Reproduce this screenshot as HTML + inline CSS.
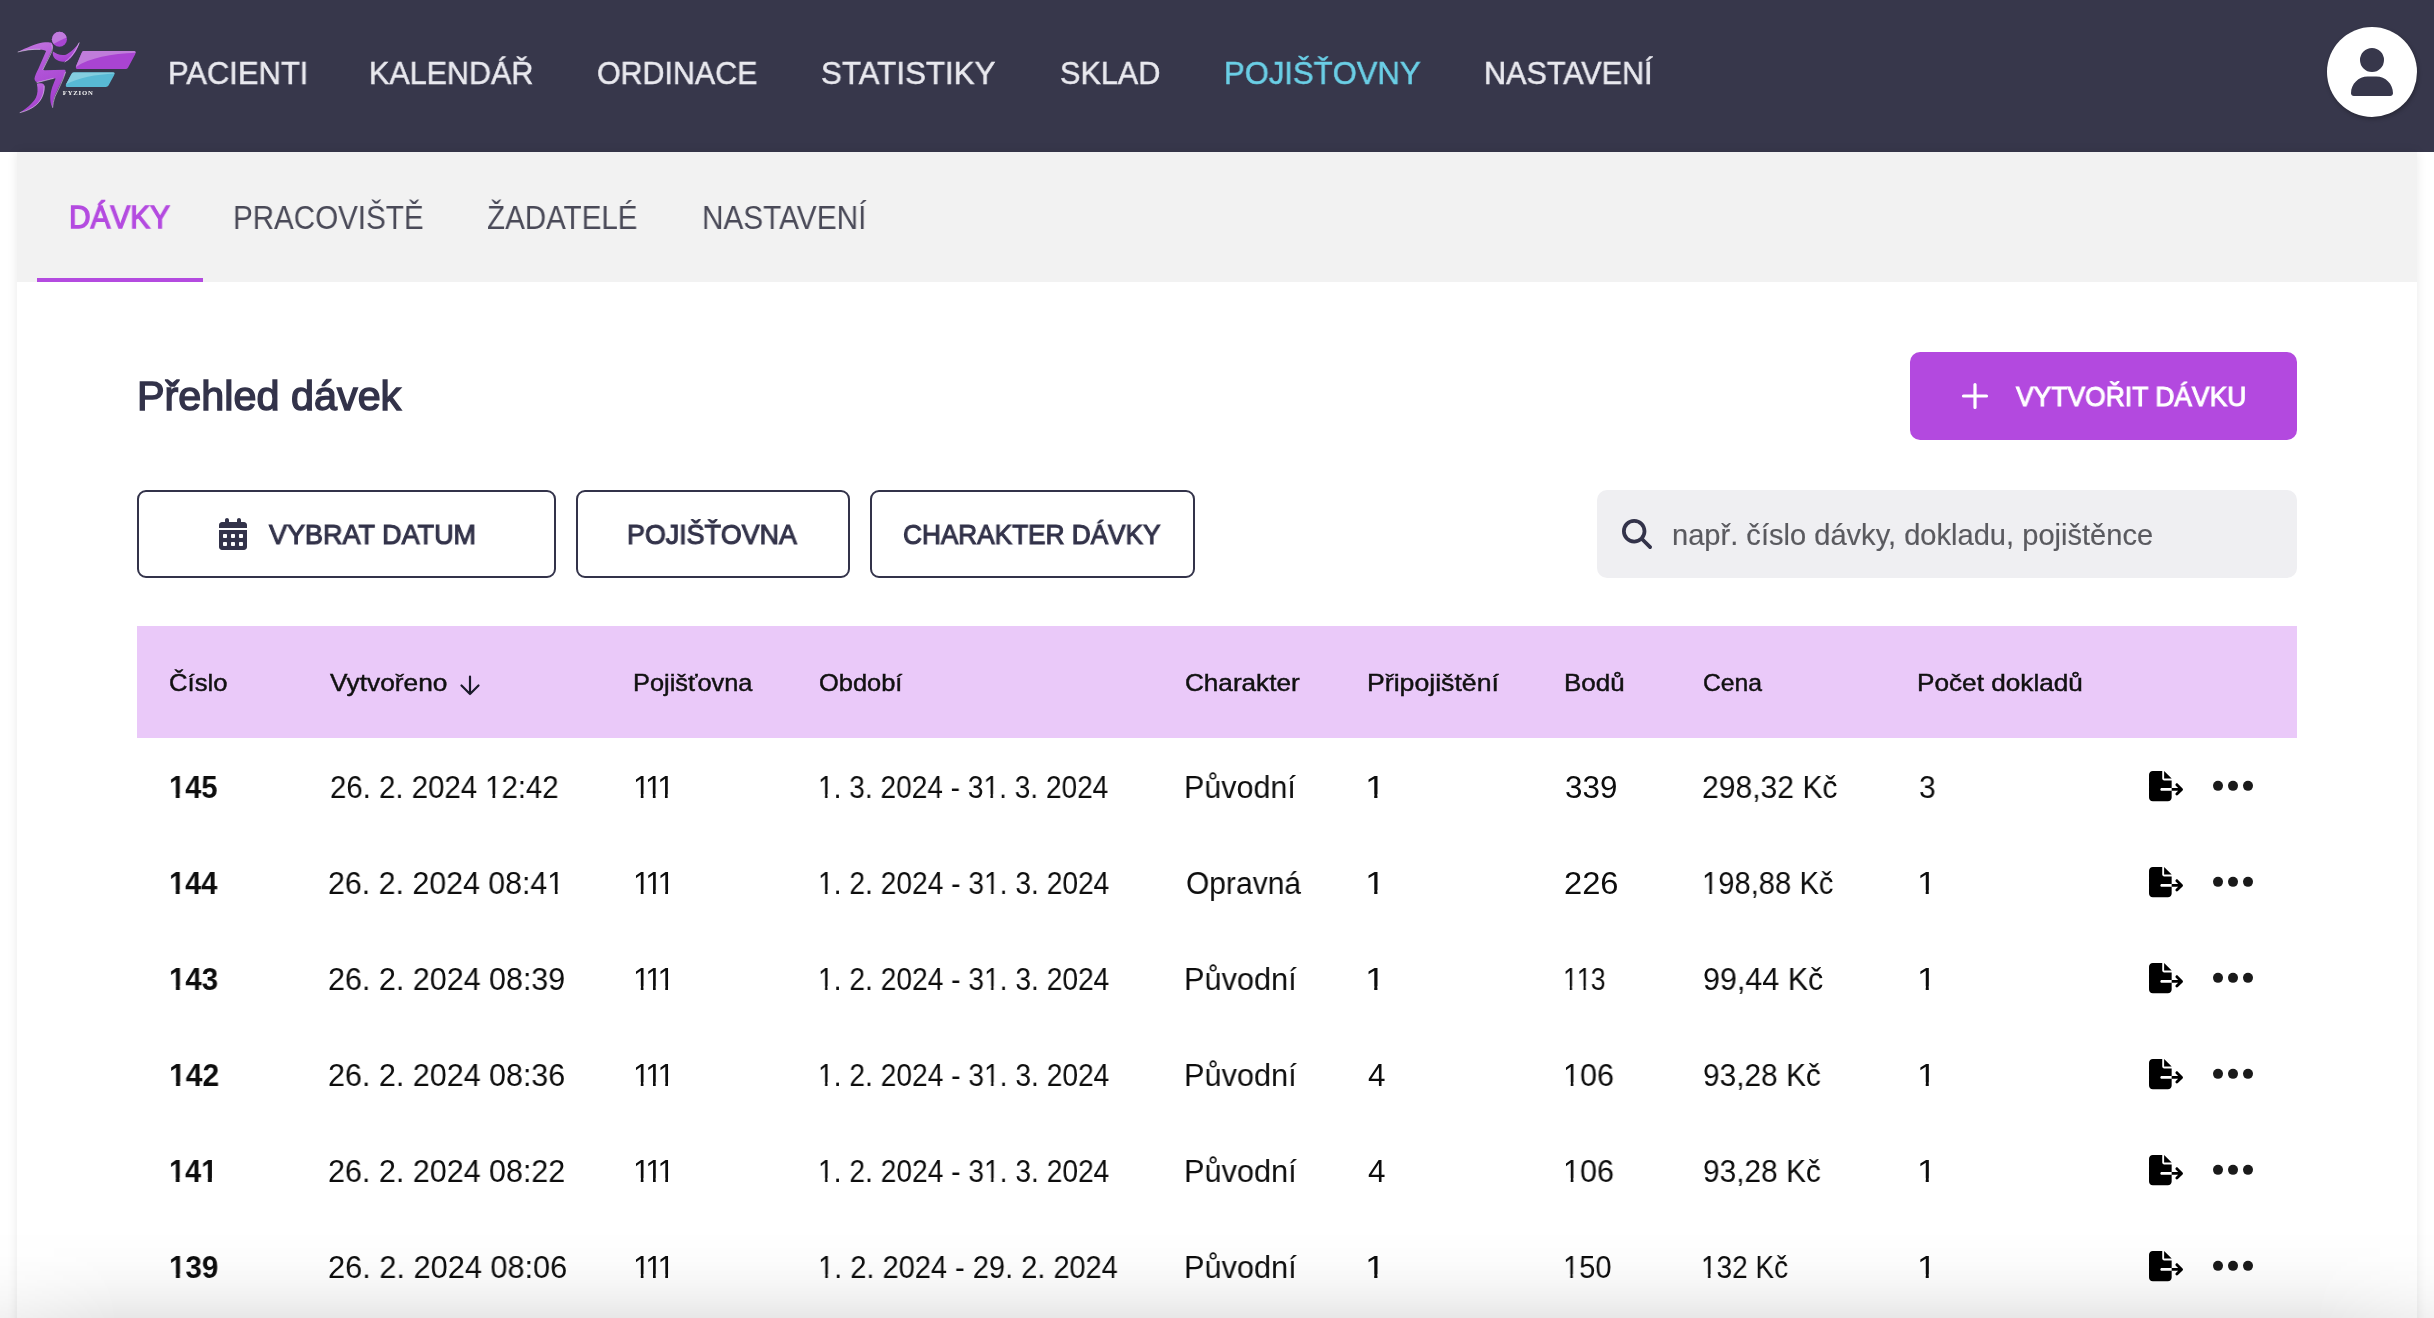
<!DOCTYPE html>
<html><head><meta charset="utf-8">
<style>
html,body{margin:0;padding:0;width:2434px;height:1318px;overflow:hidden;background:#ffffff;font-family:"Liberation Sans", sans-serif;}
.t{position:absolute;line-height:1;white-space:pre;transform-origin:0 0;will-change:transform;}
.ic{position:absolute;display:block;overflow:visible;}
#hdr{position:absolute;left:0;top:0;width:2434px;height:152px;background:#37374b;}
#card{position:absolute;left:17px;top:152px;width:2400px;height:1300px;background:#fff;box-shadow:0 0 10px rgba(0,0,0,0.09);}
#tabbar{position:absolute;left:17px;top:152px;width:2400px;height:130px;background:#f2f2f2;}
#uline{position:absolute;left:37px;top:278px;width:166px;height:4px;background:#b44be0;}
#create{position:absolute;left:1910px;top:352px;width:387px;height:88px;background:#b349df;border-radius:10px;}
.fbtn{position:absolute;top:490px;height:84px;border:2px solid #33334a;border-radius:9px;box-sizing:content-box;}
#search{position:absolute;left:1597px;top:490px;width:700px;height:88px;background:#efeff2;border-radius:10px;}
#thead{position:absolute;left:137px;top:626px;width:2160px;height:112px;background:#eac9f9;}
#fade{position:absolute;left:0;top:1228px;width:2434px;height:90px;background:linear-gradient(to bottom, rgba(0,0,0,0) 0%, rgba(0,0,0,0.008) 30%, rgba(0,0,0,0.03) 60%, rgba(0,0,0,0.058) 80%, rgba(0,0,0,0.095) 100%);-webkit-mask-image:linear-gradient(to right, rgba(0,0,0,0.55) 0px, #000 120px, #000 2314px, rgba(0,0,0,0.55) 2434px);}
.o{display:inline-block;clip-path:polygon(-0.1em -0.2em,0.7em -0.2em,0.7em 0.72em,0.338em 0.72em,0.338em 1.1em,0.25em 1.1em,0.25em 0.72em,-0.1em 0.72em)}.ob{display:inline-block;clip-path:polygon(-0.1em -0.2em,0.7em -0.2em,0.7em 0.7em,0.367em 0.7em,0.367em 1.1em,0.233em 1.1em,0.233em 0.7em,-0.1em 0.7em)}
</style></head><body>
<div id="hdr"></div>
<div id="card"></div>
<div id="tabbar"></div>
<div id="uline"></div>
<div style="position:absolute;left:2327px;top:27px;width:90px;height:90px;border-radius:50%;background:#fff;box-shadow:1px 2px 4px rgba(0,0,0,0.28)"></div>
<svg class="ic" style="left:2351px;top:48px;width:42px;height:48px" viewBox="0 0 448 512"><path fill="#37374b" d="M224 256A128 128 0 1 0 224 0a128 128 0 1 0 0 256zm-45.7 48C79.800 304 0 383.800 0 482.300C0 498.700 13.300 512 29.700 512H418.300c16.400 0 29.700-13.300 29.700-29.700C448 383.800 368.200 304 269.700 304H178.300z"/></svg>
<div id="create"></div>
<svg class="ic" style="left:1962px;top:383px;width:26px;height:26px" viewBox="0 0 26 26"><path d="M13 1.5V24.5M1.5 13H24.5" stroke="#fff" stroke-width="3.2" stroke-linecap="round"/></svg>
<div class="fbtn" style="left:137px;width:415px"></div>
<div class="fbtn" style="left:576px;width:270px"></div>
<div class="fbtn" style="left:870px;width:321px"></div>
<svg class="ic" style="left:219px;top:518px;width:28px;height:32px" viewBox="0 0 448 512"><path fill="#33334a" d="M128 0c17.700 0 32 14.300 32 32V64H288V32c0-17.700 14.300-32 32-32s32 14.300 32 32V64h48c26.500 0 48 21.500 48 48v48H0V112C0 85.500 21.500 64 48 64H96V32c0-17.700 14.300-32 32-32zM0 192H448V464c0 26.500-21.500 48-48 48H48c-26.500 0-48-21.500-48-48V192zm64 80v32c0 8.800 7.200 16 16 16h32c8.800 0 16-7.200 16-16V272c0-8.800-7.200-16-16-16H80c-8.800 0-16 7.200-16 16zm128 0v32c0 8.800 7.200 16 16 16h32c8.800 0 16-7.200 16-16V272c0-8.800-7.200-16-16-16H208c-8.800 0-16 7.200-16 16zm144-16c-8.800 0-16 7.200-16 16v32c0 8.800 7.200 16 16 16h32c8.800 0 16-7.200 16-16V272c0-8.800-7.200-16-16-16H336zM64 400v32c0 8.800 7.200 16 16 16h32c8.800 0 16-7.200 16-16V400c0-8.800-7.200-16-16-16H80c-8.800 0-16 7.200-16 16zm144-16c-8.800 0-16 7.200-16 16v32c0 8.800 7.200 16 16 16h32c8.800 0 16-7.200 16-16V400c0-8.800-7.200-16-16-16H208zm112 16v32c0 8.800 7.200 16 16 16h32c8.800 0 16-7.200 16-16V400c0-8.800-7.200-16-16-16H336c-8.800 0-16 7.200-16 16z"/></svg>
<div id="search"></div>
<svg class="ic" style="left:1622px;top:519px;width:30px;height:30px" viewBox="0 0 512 512"><path fill="#33334a" d="M416 208c0 45.900-14.900 88.300-40 122.700L502.600 457.400c12.500 12.500 12.500 32.800 0 45.300s-32.800 12.500-45.300 0L330.700 376c-34.400 25.200-76.800 40-122.700 40C93.100 416 0 322.900 0 208S93.100 0 208 0S416 93.100 416 208zM208 352a144 144 0 1 0 0-288 144 144 0 1 0 0 288z"/></svg>
<div id="thead"></div>
<svg class="ic" style="left:459px;top:675px;width:22px;height:21px" viewBox="0 0 22 21"><path d="M11 1.5V19M2.5 10.5L11 19L19.5 10.5" stroke="#1a1a2a" stroke-width="2.2" fill="none" stroke-linecap="round" stroke-linejoin="round"/></svg>
<svg class="ic" style="left:0px;top:0px;width:150px;height:150px;will-change:transform" viewBox="0 0 150 150">
<defs>
<linearGradient id="lgp" x1="0" y1="0" x2="0.3" y2="1"><stop offset="0" stop-color="#c57ae0"/><stop offset="0.45" stop-color="#b257d8"/><stop offset="1" stop-color="#a641d0"/></linearGradient>
<linearGradient id="lgc" x1="0" y1="0" x2="0.2" y2="1"><stop offset="0" stop-color="#86cfe0"/><stop offset="0.5" stop-color="#5fbdd6"/><stop offset="1" stop-color="#52b4d2"/></linearGradient>
<clipPath id="cph"><circle cx="665" cy="165" r="110"/></clipPath>
<clipPath id="cpb"><path d="M1000 372 L1600 372 Q1640 372 1620 410 L1535 570 Q1525 588 1500 588 L935 588 Q895 588 912 552 L975 400 Q988 372 1000 372 Z"/></clipPath>
<clipPath id="cpc"><path d="M885 625 L1350 625 Q1385 625 1370 655 L1300 785 Q1290 802 1268 802 L810 802 Q775 802 790 772 L855 650 Q865 625 885 625 Z"/></clipPath>
</defs>
<g transform="translate(14,28) scale(0.06831)">
<circle cx="665" cy="165" r="110" fill="#a946d2"/>
<path clip-path="url(#cph)" fill="#c07bdc" d="M540 40 L800 40 L800 130 C740 150 650 190 560 245 L540 245 Z"/>
<path fill="url(#lgp)" d="M55 350 C180 290 330 225 420 212 C470 205 520 205 545 215 C575 235 570 290 545 345 L430 590 C420 612 430 620 455 618 L735 612 C760 612 762 640 745 675 C710 760 640 890 590 1010 C565 1080 565 1140 565 1170 C530 1110 520 1020 545 920 C565 840 590 790 610 740 C570 735 480 760 400 785 C340 805 300 790 300 740 C305 700 330 650 355 600 L470 335 C420 310 300 310 200 322 C140 330 90 345 55 350 Z"/>
<path fill="url(#lgp)" d="M335 815 C380 805 420 805 440 830 C455 880 440 960 400 1040 C340 1140 220 1210 80 1240 C180 1180 270 1110 320 1020 C350 960 350 890 335 815 Z"/>
<path fill="url(#lgp)" d="M570 345 C620 380 690 410 760 390 C830 360 900 290 960 205 C940 290 880 400 800 470 C740 510 660 495 600 450 C570 420 560 380 570 345 Z"/>
<g fill="none" stroke="#eadcf5" stroke-opacity="0.75" stroke-width="11" stroke-linecap="round">
<path d="M556 250 C572 290 560 335 540 375 L425 605"/>
<path d="M952 220 C905 330 845 430 745 497"/>
<path d="M754 648 C722 760 652 890 602 1000 C577 1070 569 1120 566 1162"/>
<path d="M442 850 C447 960 402 1050 332 1120 C262 1180 172 1220 90 1238"/>
<path d="M335 800 C420 780 500 755 575 738"/>
<path d="M60 350 C150 330 260 305 380 312"/>
</g>
</g>
<g transform="translate(0,20) scale(0.08347)">
<g clip-path="url(#cpb)">
<rect x="880" y="360" width="780" height="240" fill="#a944d2"/>
<path fill="#c07ddb" d="M880 600 L880 350 L1660 350 L1660 392 C1350 400 1080 450 905 565 Z"/>
</g>
<g clip-path="url(#cpc)">
<rect x="760" y="615" width="640" height="200" fill="#58b9d4"/>
<path fill="#84cddf" d="M760 800 L760 610 L1400 610 L1400 640 C1150 650 950 690 790 770 Z"/>
</g>
<text x="752" y="898" font-family="Liberation Serif" font-weight="700" font-size="80" fill="#f4f4f4" letter-spacing="10">FYZION</text>
</g>
</svg>

<div class="t" style="left:167.5px;top:56.70px;font-size:32.2px;color:#e9e9ef;font-weight:400;letter-spacing:0px;transform:scaleX(0.961);-webkit-text-stroke:0.5px #e9e9ef">PACIENTI</div>
<div class="t" style="left:369.4px;top:56.70px;font-size:32.2px;color:#e9e9ef;font-weight:400;letter-spacing:0px;transform:scaleX(0.9476);-webkit-text-stroke:0.5px #e9e9ef">KALENDÁŘ</div>
<div class="t" style="left:596.5px;top:56.70px;font-size:32.2px;color:#e9e9ef;font-weight:400;letter-spacing:0px;transform:scaleX(0.9435);-webkit-text-stroke:0.5px #e9e9ef">ORDINACE</div>
<div class="t" style="left:821px;top:56.70px;font-size:32.2px;color:#e9e9ef;font-weight:400;letter-spacing:0px;transform:scaleX(0.9719);-webkit-text-stroke:0.5px #e9e9ef">STATISTIKY</div>
<div class="t" style="left:1060px;top:56.70px;font-size:32.2px;color:#e9e9ef;font-weight:400;letter-spacing:0px;transform:scaleX(0.9515);-webkit-text-stroke:0.5px #e9e9ef">SKLAD</div>
<div class="t" style="left:1223.5px;top:56.70px;font-size:32.2px;color:#6bcfe6;font-weight:400;letter-spacing:0px;transform:scaleX(0.9637);-webkit-text-stroke:0.5px #6bcfe6">POJIŠŤOVNY</div>
<div class="t" style="left:1484px;top:56.70px;font-size:32.2px;color:#e9e9ef;font-weight:400;letter-spacing:0px;transform:scaleX(0.9489);-webkit-text-stroke:0.5px #e9e9ef">NASTAVENÍ</div>
<div class="t" style="left:68.7px;top:201.61px;font-size:31.5px;color:#b44be0;font-weight:400;letter-spacing:0px;transform:scaleX(0.9457);-webkit-text-stroke:1.3px #b44be0">DÁVKY</div>
<div class="t" style="left:233px;top:200.72px;font-size:33px;color:#4a4a58;font-weight:400;letter-spacing:0px;transform:scaleX(0.8962);-webkit-text-stroke:0px #4a4a58">PRACOVIŠTĚ</div>
<div class="t" style="left:487px;top:200.72px;font-size:33px;color:#4a4a58;font-weight:400;letter-spacing:0px;transform:scaleX(0.8952);-webkit-text-stroke:0px #4a4a58">ŽADATELÉ</div>
<div class="t" style="left:701.5px;top:200.72px;font-size:33px;color:#4a4a58;font-weight:400;letter-spacing:0px;transform:scaleX(0.9022);-webkit-text-stroke:0px #4a4a58">NASTAVENÍ</div>
<div class="t" style="left:136.5px;top:376.30px;font-size:40px;color:#33334a;font-weight:400;letter-spacing:0px;transform:scaleX(1.0335);-webkit-text-stroke:1.4px #33334a">Přehled dávek</div>
<div class="t" style="left:2016px;top:383.10px;font-size:27.5px;color:#ffffff;font-weight:400;letter-spacing:0px;transform:scaleX(0.9622);-webkit-text-stroke:1.0px #ffffff">VYTVOŘIT DÁVKU</div>
<div class="t" style="left:269.4px;top:520.77px;font-size:28px;color:#33334a;font-weight:400;letter-spacing:0px;transform:scaleX(0.9643);-webkit-text-stroke:1.1px #33334a">VYBRAT DATUM</div>
<div class="t" style="left:627px;top:520.77px;font-size:28px;color:#33334a;font-weight:400;letter-spacing:0px;transform:scaleX(0.9574);-webkit-text-stroke:1.1px #33334a">POJIŠŤOVNA</div>
<div class="t" style="left:903.4px;top:520.77px;font-size:28px;color:#33334a;font-weight:400;letter-spacing:0px;transform:scaleX(0.935);-webkit-text-stroke:1.1px #33334a">CHARAKTER DÁVKY</div>
<div class="t" style="left:1671.7px;top:520.94px;font-size:29px;color:#5a5a5f;font-weight:400;letter-spacing:0px;transform:scaleX(1.0027);-webkit-text-stroke:0.15px #5a5a5f">např. číslo dávky, dokladu, pojištěnce</div>
<div class="t" style="left:168.5px;top:670.81px;font-size:24.5px;color:#111111;font-weight:400;letter-spacing:0px;transform:scaleX(1.0463);-webkit-text-stroke:0.45px #111111">Číslo</div>
<div class="t" style="left:330px;top:670.81px;font-size:24.5px;color:#111111;font-weight:400;letter-spacing:0px;transform:scaleX(1.0734);-webkit-text-stroke:0.45px #111111">Vytvořeno</div>
<div class="t" style="left:633px;top:670.81px;font-size:24.5px;color:#111111;font-weight:400;letter-spacing:0px;transform:scaleX(1.0351);-webkit-text-stroke:0.45px #111111">Pojišťovna</div>
<div class="t" style="left:819px;top:670.81px;font-size:24.5px;color:#111111;font-weight:400;letter-spacing:0px;transform:scaleX(1.038);-webkit-text-stroke:0.45px #111111">Období</div>
<div class="t" style="left:1185px;top:670.81px;font-size:24.5px;color:#111111;font-weight:400;letter-spacing:0px;transform:scaleX(1.0654);-webkit-text-stroke:0.45px #111111">Charakter</div>
<div class="t" style="left:1366.5px;top:670.81px;font-size:24.5px;color:#111111;font-weight:400;letter-spacing:0px;transform:scaleX(1.0882);-webkit-text-stroke:0.45px #111111">Připojištění</div>
<div class="t" style="left:1563.7px;top:670.81px;font-size:24.5px;color:#111111;font-weight:400;letter-spacing:0px;transform:scaleX(1.0611);-webkit-text-stroke:0.45px #111111">Bodů</div>
<div class="t" style="left:1702.5px;top:670.81px;font-size:24.5px;color:#111111;font-weight:400;letter-spacing:0px;transform:scaleX(1.0086);-webkit-text-stroke:0.45px #111111">Cena</div>
<div class="t" style="left:1916.6px;top:670.81px;font-size:24.5px;color:#111111;font-weight:400;letter-spacing:0px;transform:scaleX(1.0684);-webkit-text-stroke:0.45px #111111">Počet dokladů</div>
<div class="t" style="left:168.7px;top:771.54px;font-size:31px;color:#0d0d0d;font-weight:700;letter-spacing:0px;transform:scaleX(0.9367);-webkit-text-stroke:0px #0d0d0d"><span class="ob">1</span>45</div>
<div class="t" style="left:329.5px;top:771.54px;font-size:31px;color:#0d0d0d;font-weight:400;letter-spacing:0px;transform:scaleX(0.9475);-webkit-text-stroke:0px #0d0d0d">26. 2. 2024 <span class="o">1</span>2:42</div>
<div class="t" style="left:632.8px;top:771.54px;font-size:31px;color:#0d0d0d;font-weight:400;letter-spacing:-5.15px;transform:scaleX(1.0);-webkit-text-stroke:0px #0d0d0d"><span class="o">1</span><span class="o">1</span><span class="o">1</span></div>
<div class="t" style="left:817.5px;top:771.54px;font-size:31px;color:#0d0d0d;font-weight:400;letter-spacing:0px;transform:scaleX(0.9054);-webkit-text-stroke:0px #0d0d0d"><span class="o">1</span>. 3. 2024 - 3<span class="o">1</span>. 3. 2024</div>
<div class="t" style="left:1184px;top:771.54px;font-size:31px;color:#0d0d0d;font-weight:400;letter-spacing:0px;transform:scaleX(0.982);-webkit-text-stroke:0px #0d0d0d">Původní</div>
<div class="t" style="left:1364.5px;top:771.54px;font-size:31px;color:#0d0d0d;font-weight:400;letter-spacing:0px;transform:scaleX(1.1875);-webkit-text-stroke:0px #0d0d0d"><span class="o">1</span></div>
<div class="t" style="left:1565px;top:771.54px;font-size:31px;color:#0d0d0d;font-weight:400;letter-spacing:0px;transform:scaleX(1.0122);-webkit-text-stroke:0px #0d0d0d">339</div>
<div class="t" style="left:1702px;top:771.54px;font-size:31px;color:#0d0d0d;font-weight:400;letter-spacing:0px;transform:scaleX(0.9706);-webkit-text-stroke:0px #0d0d0d">298,32 Kč</div>
<div class="t" style="left:1918.5px;top:771.54px;font-size:31px;color:#0d0d0d;font-weight:400;letter-spacing:0px;transform:scaleX(0.9667);-webkit-text-stroke:0px #0d0d0d">3</div>
<div class="t" style="left:168.5px;top:867.54px;font-size:31px;color:#0d0d0d;font-weight:700;letter-spacing:0px;transform:scaleX(0.934);-webkit-text-stroke:0px #0d0d0d"><span class="ob">1</span>44</div>
<div class="t" style="left:328px;top:867.54px;font-size:31px;color:#0d0d0d;font-weight:400;letter-spacing:0px;transform:scaleX(0.9785);-webkit-text-stroke:0px #0d0d0d">26. 2. 2024 08:4<span class="o">1</span></div>
<div class="t" style="left:632.5px;top:867.54px;font-size:31px;color:#0d0d0d;font-weight:400;letter-spacing:-5.0px;transform:scaleX(1.0);-webkit-text-stroke:0px #0d0d0d"><span class="o">1</span><span class="o">1</span><span class="o">1</span></div>
<div class="t" style="left:817.5px;top:867.54px;font-size:31px;color:#0d0d0d;font-weight:400;letter-spacing:0px;transform:scaleX(0.9085);-webkit-text-stroke:0px #0d0d0d"><span class="o">1</span>. 2. 2024 - 3<span class="o">1</span>. 3. 2024</div>
<div class="t" style="left:1185.5px;top:867.54px;font-size:31px;color:#0d0d0d;font-weight:400;letter-spacing:0px;transform:scaleX(0.9669);-webkit-text-stroke:0px #0d0d0d">Opravná</div>
<div class="t" style="left:1364.5px;top:867.54px;font-size:31px;color:#0d0d0d;font-weight:400;letter-spacing:0px;transform:scaleX(1.1875);-webkit-text-stroke:0px #0d0d0d"><span class="o">1</span></div>
<div class="t" style="left:1563.8px;top:867.54px;font-size:31px;color:#0d0d0d;font-weight:400;letter-spacing:0px;transform:scaleX(1.0542);-webkit-text-stroke:0px #0d0d0d">226</div>
<div class="t" style="left:1701.5px;top:867.54px;font-size:31px;color:#0d0d0d;font-weight:400;letter-spacing:0px;transform:scaleX(0.9415);-webkit-text-stroke:0px #0d0d0d"><span class="o">1</span>98,88 Kč</div>
<div class="t" style="left:1917px;top:867.54px;font-size:31px;color:#0d0d0d;font-weight:400;letter-spacing:0px;transform:scaleX(1.125);-webkit-text-stroke:0px #0d0d0d"><span class="o">1</span></div>
<div class="t" style="left:168.5px;top:963.54px;font-size:31px;color:#0d0d0d;font-weight:700;letter-spacing:0px;transform:scaleX(0.949);-webkit-text-stroke:0px #0d0d0d"><span class="ob">1</span>43</div>
<div class="t" style="left:328px;top:963.54px;font-size:31px;color:#0d0d0d;font-weight:400;letter-spacing:0px;transform:scaleX(0.9832);-webkit-text-stroke:0px #0d0d0d">26. 2. 2024 08:39</div>
<div class="t" style="left:632.5px;top:963.54px;font-size:31px;color:#0d0d0d;font-weight:400;letter-spacing:-5.0px;transform:scaleX(1.0);-webkit-text-stroke:0px #0d0d0d"><span class="o">1</span><span class="o">1</span><span class="o">1</span></div>
<div class="t" style="left:817.5px;top:963.54px;font-size:31px;color:#0d0d0d;font-weight:400;letter-spacing:0px;transform:scaleX(0.9085);-webkit-text-stroke:0px #0d0d0d"><span class="o">1</span>. 2. 2024 - 3<span class="o">1</span>. 3. 2024</div>
<div class="t" style="left:1184px;top:963.54px;font-size:31px;color:#0d0d0d;font-weight:400;letter-spacing:0px;transform:scaleX(0.9892);-webkit-text-stroke:0px #0d0d0d">Původní</div>
<div class="t" style="left:1364.5px;top:963.54px;font-size:31px;color:#0d0d0d;font-weight:400;letter-spacing:0px;transform:scaleX(1.1875);-webkit-text-stroke:0px #0d0d0d"><span class="o">1</span></div>
<div class="t" style="left:1563px;top:963.54px;font-size:31px;color:#0d0d0d;font-weight:400;letter-spacing:-1.174px;transform:scaleX(0.86);-webkit-text-stroke:0px #0d0d0d"><span class="o">1</span><span class="o">1</span>3</div>
<div class="t" style="left:1703px;top:963.54px;font-size:31px;color:#0d0d0d;font-weight:400;letter-spacing:0px;transform:scaleX(0.9833);-webkit-text-stroke:0px #0d0d0d">99,44 Kč</div>
<div class="t" style="left:1917px;top:963.54px;font-size:31px;color:#0d0d0d;font-weight:400;letter-spacing:0px;transform:scaleX(1.125);-webkit-text-stroke:0px #0d0d0d"><span class="o">1</span></div>
<div class="t" style="left:168.5px;top:1059.54px;font-size:31px;color:#0d0d0d;font-weight:700;letter-spacing:0px;transform:scaleX(0.9694);-webkit-text-stroke:0px #0d0d0d"><span class="ob">1</span>42</div>
<div class="t" style="left:328px;top:1059.54px;font-size:31px;color:#0d0d0d;font-weight:400;letter-spacing:0px;transform:scaleX(0.9832);-webkit-text-stroke:0px #0d0d0d">26. 2. 2024 08:36</div>
<div class="t" style="left:632.5px;top:1059.54px;font-size:31px;color:#0d0d0d;font-weight:400;letter-spacing:-5.0px;transform:scaleX(1.0);-webkit-text-stroke:0px #0d0d0d"><span class="o">1</span><span class="o">1</span><span class="o">1</span></div>
<div class="t" style="left:817.5px;top:1059.54px;font-size:31px;color:#0d0d0d;font-weight:400;letter-spacing:0px;transform:scaleX(0.9085);-webkit-text-stroke:0px #0d0d0d"><span class="o">1</span>. 2. 2024 - 3<span class="o">1</span>. 3. 2024</div>
<div class="t" style="left:1184px;top:1059.54px;font-size:31px;color:#0d0d0d;font-weight:400;letter-spacing:0px;transform:scaleX(0.9892);-webkit-text-stroke:0px #0d0d0d">Původní</div>
<div class="t" style="left:1367.8px;top:1059.54px;font-size:31px;color:#0d0d0d;font-weight:400;letter-spacing:0px;transform:scaleX(1.0133);-webkit-text-stroke:0px #0d0d0d">4</div>
<div class="t" style="left:1563px;top:1059.54px;font-size:31px;color:#0d0d0d;font-weight:400;letter-spacing:0px;transform:scaleX(0.9851);-webkit-text-stroke:0px #0d0d0d"><span class="o">1</span>06</div>
<div class="t" style="left:1703px;top:1059.54px;font-size:31px;color:#0d0d0d;font-weight:400;letter-spacing:0px;transform:scaleX(0.9633);-webkit-text-stroke:0px #0d0d0d">93,28 Kč</div>
<div class="t" style="left:1917px;top:1059.54px;font-size:31px;color:#0d0d0d;font-weight:400;letter-spacing:0px;transform:scaleX(1.125);-webkit-text-stroke:0px #0d0d0d"><span class="o">1</span></div>
<div class="t" style="left:168.5px;top:1155.54px;font-size:31px;color:#0d0d0d;font-weight:700;letter-spacing:0px;transform:scaleX(0.9318);-webkit-text-stroke:0px #0d0d0d"><span class="ob">1</span>4<span class="ob">1</span></div>
<div class="t" style="left:328px;top:1155.54px;font-size:31px;color:#0d0d0d;font-weight:400;letter-spacing:0px;transform:scaleX(0.9832);-webkit-text-stroke:0px #0d0d0d">26. 2. 2024 08:22</div>
<div class="t" style="left:632.5px;top:1155.54px;font-size:31px;color:#0d0d0d;font-weight:400;letter-spacing:-5.0px;transform:scaleX(1.0);-webkit-text-stroke:0px #0d0d0d"><span class="o">1</span><span class="o">1</span><span class="o">1</span></div>
<div class="t" style="left:817.5px;top:1155.54px;font-size:31px;color:#0d0d0d;font-weight:400;letter-spacing:0px;transform:scaleX(0.9085);-webkit-text-stroke:0px #0d0d0d"><span class="o">1</span>. 2. 2024 - 3<span class="o">1</span>. 3. 2024</div>
<div class="t" style="left:1184px;top:1155.54px;font-size:31px;color:#0d0d0d;font-weight:400;letter-spacing:0px;transform:scaleX(0.9892);-webkit-text-stroke:0px #0d0d0d">Původní</div>
<div class="t" style="left:1367.8px;top:1155.54px;font-size:31px;color:#0d0d0d;font-weight:400;letter-spacing:0px;transform:scaleX(1.0133);-webkit-text-stroke:0px #0d0d0d">4</div>
<div class="t" style="left:1563px;top:1155.54px;font-size:31px;color:#0d0d0d;font-weight:400;letter-spacing:0px;transform:scaleX(0.9851);-webkit-text-stroke:0px #0d0d0d"><span class="o">1</span>06</div>
<div class="t" style="left:1703px;top:1155.54px;font-size:31px;color:#0d0d0d;font-weight:400;letter-spacing:0px;transform:scaleX(0.9633);-webkit-text-stroke:0px #0d0d0d">93,28 Kč</div>
<div class="t" style="left:1917px;top:1155.54px;font-size:31px;color:#0d0d0d;font-weight:400;letter-spacing:0px;transform:scaleX(1.125);-webkit-text-stroke:0px #0d0d0d"><span class="o">1</span></div>
<div class="t" style="left:168.5px;top:1251.54px;font-size:31px;color:#0d0d0d;font-weight:700;letter-spacing:0px;transform:scaleX(0.9531);-webkit-text-stroke:0px #0d0d0d"><span class="ob">1</span>39</div>
<div class="t" style="left:328px;top:1251.54px;font-size:31px;color:#0d0d0d;font-weight:400;letter-spacing:0px;transform:scaleX(0.9916);-webkit-text-stroke:0px #0d0d0d">26. 2. 2024 08:06</div>
<div class="t" style="left:632.5px;top:1251.54px;font-size:31px;color:#0d0d0d;font-weight:400;letter-spacing:-5.0px;transform:scaleX(1.0);-webkit-text-stroke:0px #0d0d0d"><span class="o">1</span><span class="o">1</span><span class="o">1</span></div>
<div class="t" style="left:817.5px;top:1251.54px;font-size:31px;color:#0d0d0d;font-weight:400;letter-spacing:0px;transform:scaleX(0.9353);-webkit-text-stroke:0px #0d0d0d"><span class="o">1</span>. 2. 2024 - 29. 2. 2024</div>
<div class="t" style="left:1184px;top:1251.54px;font-size:31px;color:#0d0d0d;font-weight:400;letter-spacing:0px;transform:scaleX(0.9892);-webkit-text-stroke:0px #0d0d0d">Původní</div>
<div class="t" style="left:1364.5px;top:1251.54px;font-size:31px;color:#0d0d0d;font-weight:400;letter-spacing:0px;transform:scaleX(1.1875);-webkit-text-stroke:0px #0d0d0d"><span class="o">1</span></div>
<div class="t" style="left:1563px;top:1251.54px;font-size:31px;color:#0d0d0d;font-weight:400;letter-spacing:0px;transform:scaleX(0.9375);-webkit-text-stroke:0px #0d0d0d"><span class="o">1</span>50</div>
<div class="t" style="left:1701px;top:1251.54px;font-size:31px;color:#0d0d0d;font-weight:400;letter-spacing:0px;transform:scaleX(0.9022);-webkit-text-stroke:0px #0d0d0d"><span class="o">1</span>32 Kč</div>
<div class="t" style="left:1917px;top:1251.54px;font-size:31px;color:#0d0d0d;font-weight:400;letter-spacing:0px;transform:scaleX(1.125);-webkit-text-stroke:0px #0d0d0d"><span class="o">1</span></div>
<svg class="ic" style="left:2149px;top:770.6px;width:34px;height:30.2px" viewBox="0 0 576 512"><path fill="#000" d="M0 64C0 28.7 28.7 0 64 0H224V128c0 17.7 14.3 32 32 32H384V288H216c-13.3 0-24 10.7-24 24s10.7 24 24 24H384V448c0 35.3-28.7 64-64 64H64c-35.3 0-64-28.7-64-64V64zM384 336V288H494.1l-39-39c-9.4-9.4-9.4-24.6 0-33.9s24.6-9.4 33.9 0l80 80c9.4 9.4 9.4 24.6 0 33.9l-80 80c-9.4 9.4-24.6 9.4-33.9 0s-9.4-24.6 0-33.9l39-39H384zm0-208H256V0L384 128z"/></svg>
<svg class="ic" style="left:2213px;top:763.1px;width:40px;height:45.71px" viewBox="0 0 448 512"><circle cx="56" cy="256" r="56" fill="#1a1a1a"/><circle cx="224" cy="256" r="56" fill="#1a1a1a"/><circle cx="392" cy="256" r="56" fill="#1a1a1a"/></svg>
<svg class="ic" style="left:2149px;top:866.6px;width:34px;height:30.2px" viewBox="0 0 576 512"><path fill="#000" d="M0 64C0 28.7 28.7 0 64 0H224V128c0 17.7 14.3 32 32 32H384V288H216c-13.3 0-24 10.7-24 24s10.7 24 24 24H384V448c0 35.3-28.7 64-64 64H64c-35.3 0-64-28.7-64-64V64zM384 336V288H494.1l-39-39c-9.4-9.4-9.4-24.6 0-33.9s24.6-9.4 33.9 0l80 80c9.4 9.4 9.4 24.6 0 33.9l-80 80c-9.4 9.4-24.6 9.4-33.9 0s-9.4-24.6 0-33.9l39-39H384zm0-208H256V0L384 128z"/></svg>
<svg class="ic" style="left:2213px;top:859.1px;width:40px;height:45.71px" viewBox="0 0 448 512"><circle cx="56" cy="256" r="56" fill="#1a1a1a"/><circle cx="224" cy="256" r="56" fill="#1a1a1a"/><circle cx="392" cy="256" r="56" fill="#1a1a1a"/></svg>
<svg class="ic" style="left:2149px;top:962.6px;width:34px;height:30.2px" viewBox="0 0 576 512"><path fill="#000" d="M0 64C0 28.7 28.7 0 64 0H224V128c0 17.7 14.3 32 32 32H384V288H216c-13.3 0-24 10.7-24 24s10.7 24 24 24H384V448c0 35.3-28.7 64-64 64H64c-35.3 0-64-28.7-64-64V64zM384 336V288H494.1l-39-39c-9.4-9.4-9.4-24.6 0-33.9s24.6-9.4 33.9 0l80 80c9.4 9.4 9.4 24.6 0 33.9l-80 80c-9.4 9.4-24.6 9.4-33.9 0s-9.4-24.6 0-33.9l39-39H384zm0-208H256V0L384 128z"/></svg>
<svg class="ic" style="left:2213px;top:955.1px;width:40px;height:45.71px" viewBox="0 0 448 512"><circle cx="56" cy="256" r="56" fill="#1a1a1a"/><circle cx="224" cy="256" r="56" fill="#1a1a1a"/><circle cx="392" cy="256" r="56" fill="#1a1a1a"/></svg>
<svg class="ic" style="left:2149px;top:1058.6px;width:34px;height:30.2px" viewBox="0 0 576 512"><path fill="#000" d="M0 64C0 28.7 28.7 0 64 0H224V128c0 17.7 14.3 32 32 32H384V288H216c-13.3 0-24 10.7-24 24s10.7 24 24 24H384V448c0 35.3-28.7 64-64 64H64c-35.3 0-64-28.7-64-64V64zM384 336V288H494.1l-39-39c-9.4-9.4-9.4-24.6 0-33.9s24.6-9.4 33.9 0l80 80c9.4 9.4 9.4 24.6 0 33.9l-80 80c-9.4 9.4-24.6 9.4-33.9 0s-9.4-24.6 0-33.9l39-39H384zm0-208H256V0L384 128z"/></svg>
<svg class="ic" style="left:2213px;top:1051.1px;width:40px;height:45.71px" viewBox="0 0 448 512"><circle cx="56" cy="256" r="56" fill="#1a1a1a"/><circle cx="224" cy="256" r="56" fill="#1a1a1a"/><circle cx="392" cy="256" r="56" fill="#1a1a1a"/></svg>
<svg class="ic" style="left:2149px;top:1154.6px;width:34px;height:30.2px" viewBox="0 0 576 512"><path fill="#000" d="M0 64C0 28.7 28.7 0 64 0H224V128c0 17.7 14.3 32 32 32H384V288H216c-13.3 0-24 10.7-24 24s10.7 24 24 24H384V448c0 35.3-28.7 64-64 64H64c-35.3 0-64-28.7-64-64V64zM384 336V288H494.1l-39-39c-9.4-9.4-9.4-24.6 0-33.9s24.6-9.4 33.9 0l80 80c9.4 9.4 9.4 24.6 0 33.9l-80 80c-9.4 9.4-24.6 9.4-33.9 0s-9.4-24.6 0-33.9l39-39H384zm0-208H256V0L384 128z"/></svg>
<svg class="ic" style="left:2213px;top:1147.1px;width:40px;height:45.71px" viewBox="0 0 448 512"><circle cx="56" cy="256" r="56" fill="#1a1a1a"/><circle cx="224" cy="256" r="56" fill="#1a1a1a"/><circle cx="392" cy="256" r="56" fill="#1a1a1a"/></svg>
<svg class="ic" style="left:2149px;top:1250.6px;width:34px;height:30.2px" viewBox="0 0 576 512"><path fill="#000" d="M0 64C0 28.7 28.7 0 64 0H224V128c0 17.7 14.3 32 32 32H384V288H216c-13.3 0-24 10.7-24 24s10.7 24 24 24H384V448c0 35.3-28.7 64-64 64H64c-35.3 0-64-28.7-64-64V64zM384 336V288H494.1l-39-39c-9.4-9.4-9.4-24.6 0-33.9s24.6-9.4 33.9 0l80 80c9.4 9.4 9.4 24.6 0 33.9l-80 80c-9.4 9.4-24.6 9.4-33.9 0s-9.4-24.6 0-33.9l39-39H384zm0-208H256V0L384 128z"/></svg>
<svg class="ic" style="left:2213px;top:1243.1px;width:40px;height:45.71px" viewBox="0 0 448 512"><circle cx="56" cy="256" r="56" fill="#1a1a1a"/><circle cx="224" cy="256" r="56" fill="#1a1a1a"/><circle cx="392" cy="256" r="56" fill="#1a1a1a"/></svg>

<div id="fade"></div>
</body></html>
